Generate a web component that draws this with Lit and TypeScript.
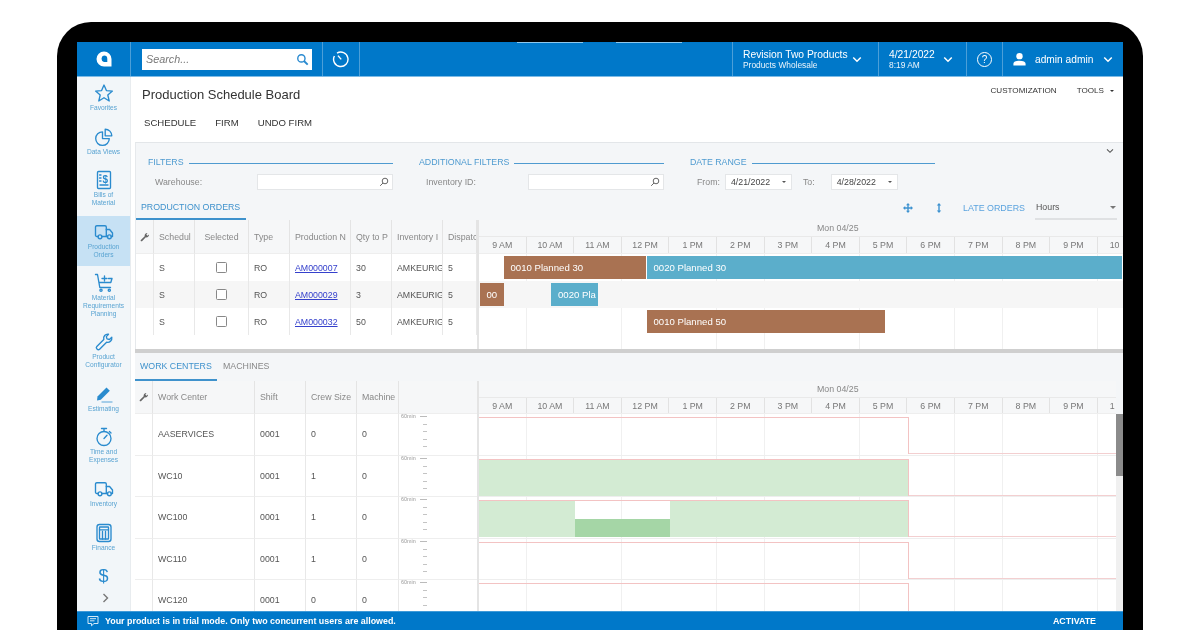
import { LitElement, html, css, nothing } from "lit";
import { customElement } from "lit/decorators.js";

const ic = (body: unknown, cls = "ic", vb = "0 0 20 20") =>
  html`<svg class=${cls} viewBox=${vb}>${body}</svg>`;

const ICONS: Record<string, unknown> = {
  star: ic(html`<svg x="0" y="0" viewBox="0 0 20 20"><polygon points="10,2 12.4,7.6 18.4,8.1 13.8,12 15.2,18 10,14.8 4.8,18 6.2,12 1.6,8.1 7.6,7.6"/></svg>`),
  pie: ic(html`<svg viewBox="0 0 20 20"><path d="M8.5 4.8A6.8 6.8 0 1 0 15.3 11.6H8.5Z"/><path d="M11.2 2.2A6.6 6.6 0 0 1 17.8 8.8H11.2Z"/></svg>`),
  bill: ic(html`<svg viewBox="0 0 20 20"><rect x="3.5" y="1.5" width="13" height="17" rx="1"/><path d="M5.6 5h1.4M5.6 8h1.4M5.6 11h1.4M6 15h8"/><text x="11.4" y="12.5" class="glyph" font-size="10" text-anchor="middle">$</text></svg>`),
  truck: ic(html`<svg viewBox="0 0 20 20"><path d="M4.2 14.5H2.8A1.3 1.3 0 0 1 1.5 13.2V5A1.3 1.3 0 0 1 2.8 3.7H11A1.3 1.3 0 0 1 12.3 5V14.5H7.8"/><path d="M12.3 7.5H15.6L18.5 11V14.5H17.2M13.6 14.5H12.3"/><circle cx="6" cy="14.8" r="1.9"/><circle cx="15.4" cy="14.8" r="1.9"/></svg>`),
  cart: ic(html`<svg viewBox="0 0 20 20"><path d="M1.5 1.5H3.5L5.8 14.5H16.5M5 9.5H16.8L18 5.5H14.5"/><path d="M10.5 3V8M8 5.5H13" /><circle cx="7" cy="17.2" r="1.1"/><circle cx="15.3" cy="17.2" r="1.1"/></svg>`),
  wrench: ic(html`<svg viewBox="0 0 20 20"><path d="M2.8 14.4L9.8 7.4C9 4.4 11.3 1.8 14.5 2.2L12.3 4.6L13 6.9L15.4 7.5L17.8 5.2C18.3 8.4 15.6 11 12.6 10.2L5.6 17.2C4 18.8 1.2 16 2.8 14.4Z"/></svg>`),
  pencil: ic(html`<svg viewBox="0 0 20 20"><path class="fill" d="M3.5 12.5L12.5 3.5L15.8 6.8L6.8 15.8L3 16.4Z"/><path class="faint" d="M8 18H18"/></svg>`),
  watch: ic(html`<svg viewBox="0 0 20 20"><circle cx="10" cy="11.5" r="7"/><path d="M7.5 1.5H12.5M10 1.5V4.5M10 11.5L13 8.2M15.4 4.4L17 6"/></svg>`),
  calc: ic(html`<svg viewBox="0 0 20 20"><rect x="3" y="1.5" width="14" height="17" rx="2.5"/><rect x="5.5" y="4" width="9" height="12" rx=".5"/><path d="M5.5 6.8H14.5M8.5 8.5V16M11.5 8.5V16"/></svg>`),
  dollar: html`<span class="dollar">$</span>`,
};

const NAV = [
  { i: "star", t: ["Favorites"] },
  { i: "pie", t: ["Data Views"] },
  { i: "bill", t: ["Bills of", "Material"] },
  { i: "truck", t: ["Production", "Orders"], on: true },
  { i: "cart", t: ["Material", "Requirements", "Planning"] },
  { i: "wrench", t: ["Product", "Configurator"] },
  { i: "pencil", t: ["Estimating"] },
  { i: "watch", t: ["Time and", "Expenses"] },
  { i: "truck", t: ["Inventory"] },
  { i: "calc", t: ["Finance"] },
  { i: "dollar", t: [] },
];

const HOURS = ["9 AM", "10 AM", "11 AM", "12 PM", "1 PM", "2 PM", "3 PM", "4 PM", "5 PM", "6 PM", "7 PM", "8 PM", "9 PM"];

const ORDERS = [
  { id: "AM000007", qty: "30", bars: [
    { l: 24.5, w: 142, c: "brown", t: "0010 Planned 30" },
    { l: 167.5, w: 475, c: "blue", t: "0020 Planned 30" },
  ] },
  { id: "AM000029", qty: "3", bars: [
    { l: 0.5, w: 24, c: "brown", t: "00" },
    { l: 72, w: 47, c: "blue", t: "0020 Pla" },
  ] },
  { id: "AM000032", qty: "50", bars: [{ l: 167.5, w: 238, c: "brown", t: "0010 Planned 50" }] },
];

const CENTERS = [
  { n: "AASERVICES", crew: "0", g: "none" },
  { n: "WC10", crew: "1", g: "full" },
  { n: "WC100", crew: "1", g: "split" },
  { n: "WC110", crew: "1", g: "none" },
  { n: "WC120", crew: "0", g: "none" },
];

const wrenchSmall = html`<svg class="hwrench" viewBox="0 0 12 12"><path d="M1 9.6L5.6 5C5.2 3 6.8 1 9 1.2L7.6 3L8.9 4.4L10.8 3C11 5.2 9 6.9 7 6.4L2.4 11C1.6 11.8.2 10.4 1 9.6Z"/></svg>`;
const chev = html`<svg class="chev" viewBox="0 0 12 8"><path d="M1.5 1.5L6 6L10.5 1.5"/></svg>`;
const lens = html`<svg class="lens" viewBox="0 0 10 10"><circle cx="6" cy="4" r="2.8"/><path d="M4 6L1.2 8.8"/></svg>`;

@customElement("app-root")
export class AppRoot extends LitElement {
  static styles = css`
    :host { display: block; width: 1200px; height: 630px; overflow: hidden; background: #fff;
      font-family: "Liberation Sans", Arial, sans-serif; color: #444; }
    .frame { box-sizing: border-box; width: 1086px; height: 608px; margin: 22px 0 0 57px; padding: 20px 20px 0;
      background: #000; border-radius: 34px 34px 0 0; }
    .screen { width: 1046px; height: 588px; display: flex; flex-direction: column; background: #fff; overflow: hidden; filter: blur(.3px); }

    .top { height: 35px; flex: none; box-sizing: border-box; display: flex; background: #0078c9; color: #fff; border-bottom: 1px solid #7dbbe6; }
    .tc { flex: none; box-sizing: border-box; height: 100%; display: flex; align-items: center; border-right: 1px solid #4c9fd8; }
    .logo { width: 54px; justify-content: center; }
    .logo svg { width: 16px; height: 16px; }
    .search { width: 192px; padding-left: 11px; }
    .box { width: 170px; height: 21px; background: #fff; display: flex; align-items: center; justify-content: space-between;
      padding: 0 3px 0 4px; box-sizing: border-box; font: italic 10.8px "Liberation Sans", sans-serif; color: #777; }
    .box svg { width: 13px; height: 13px; fill: none; stroke: #2a8ad0; stroke-width: 1.5; }
    .hist { width: 37px; justify-content: center; }
    .hist svg { width: 18px; height: 18px; fill: none; stroke: #fff; stroke-width: 1.4; }
    .grow { flex: 1; border-right: 1px solid #4c9fd8;
      background: linear-gradient(#8cc8ee, #8cc8ee) 157px 0 / 66px 1px no-repeat, linear-gradient(#8cc8ee, #8cc8ee) 256px 0 / 66px 1px no-repeat; }
    .co { width: 146px; padding-left: 10px; gap: 5px; }
    .two { display: flex; flex-direction: column; gap: 1px; width: 104px; }
    .two b { font-weight: 400; font-size: 10.3px; line-height: 11px; white-space: nowrap; }
    .two i { font-style: normal; font-size: 8.4px; line-height: 9px; opacity: .92; white-space: nowrap; }
    .dt { width: 88px; padding-left: 10px; gap: 8px; }
    .dt .two { width: 46px; }
    .help { width: 36px; justify-content: center; }
    .help span { box-sizing: border-box; width: 15px; height: 15px; border: 1.3px solid #fff; border-radius: 50%;
      font-size: 10px; line-height: 13px; text-align: center; }
    .user { width: 120px; border-right: 0; padding-left: 9px; }
    .user svg.u { width: 15px; height: 15px; fill: #fff; margin-right: 8px; }
    .user span { font-size: 10.2px; width: 62px; white-space: nowrap; }
    .user .chev { margin-left: 6px; }
    .chev { width: 10px; height: 7px; fill: none; stroke: #fff; stroke-width: 1.8; flex: none; }

    .main { flex: 1; min-height: 0; display: flex; }
    .side { width: 54px; flex: none; box-sizing: border-box; background: #f2f6f9; display: flex; flex-direction: column;
      gap: 1px; border-right: 1px solid #e8ecef; overflow: hidden; }
    .nav { display: flex; flex-direction: column; align-items: center; padding: 6px 0 8px; color: #5aa4d2; }
    .nav.on { background: #c6e1f4; }
    .nav .ic { width: 20px; height: 20px; display: block; margin-bottom: 1px; fill: none; stroke: #2a8bce; stroke-width: 1.35; stroke-linejoin: round; stroke-linecap: round; }
    .nav .ic .fill { fill: #2a8bce; stroke: none; }
    .nav .ic .faint { stroke: #8cc0e4; }
    .nav .ic .glyph { fill: #2a8bce; stroke: none; font-family: "Liberation Sans", sans-serif; font-weight: 700; }
    .nav span { display: block; font-size: 6.6px; line-height: 7.7px; text-align: center; white-space: nowrap; }
    .nav .dollar { width: 20px; height: 20px; font-size: 18px; line-height: 20px; color: #2a8bce; }
    .more { display: flex; justify-content: center; padding-left: 3px; margin-top: -2px; }
    .more svg { width: 7px; height: 10px; fill: none; stroke: #777; stroke-width: 1.4; }

    .content { flex: 1; min-width: 0; display: flex; flex-direction: column; padding-left: 4px; }
    .head { height: 65px; flex: none; box-sizing: border-box; display: grid; grid-template-columns: 1fr auto; grid-template-rows: 17px auto; padding: 9px 9px 0 7px; }
    h1 { margin: 0; font-size: 13px; font-weight: 400; line-height: 17px; color: #333; }
    .tools { display: flex; gap: 20px; font-size: 8.1px; line-height: 10px; color: #333; }
    .tools span:last-child::after { content: ""; display: inline-block; margin-left: 6px; vertical-align: 1px;
      border: 2.5px solid transparent; border-top-color: #333; border-bottom: 0; }
    .bar { grid-column: 1 / 3; display: flex; gap: 19px; font-size: 9.6px; line-height: 12px; color: #333; padding: 14px 0 0 2px; }

    .upper { height: 207px; flex: none; box-sizing: border-box; display: flex; flex-direction: column; background: #f4f6f8;
      border-top: 1px solid #e3e6e9; border-left: 1px solid #e6e9ec; overflow: hidden; }
    .filters { height: 53px; flex: none; box-sizing: border-box; display: grid; grid-template-columns: repeat(3, 245px); column-gap: 26px;
      padding: 14px 0 0 12px; position: relative; }
    .collapse { position: absolute; top: 5px; right: 9px; width: 8px; height: 6px; stroke: #555; stroke-width: 1.6; }
    .gh { display: flex; align-items: center; gap: 5px; font-size: 8.8px; line-height: 11px; color: #4f9bd0; white-space: nowrap; }
    .gh::after { content: ""; flex: 1; height: 1px; background: #4f9bd0; margin-top: 2px; }
    .fr { display: flex; align-items: center; height: 16px; margin-top: 6px; font-size: 8.8px; color: #888; }
    .fr label { padding-left: 7px; }
    .fr .lbl { width: 109px; box-sizing: border-box; }
    .in { box-sizing: border-box; height: 16px; background: #fff; border: 1px solid #e4e6e8; display: flex; align-items: center; justify-content: flex-end; padding-right: 3px; }
    .in.w { width: 136px; }
    .lens { width: 10px; height: 10px; fill: none; stroke: #666; stroke-width: 1; }
    .date { width: 67px; margin-left: 5px; justify-content: space-between; padding: 0 5px; color: #444; font-size: 8.8px; }
    .date::after { content: ""; border: 2.5px solid transparent; border-top-color: #555; border-bottom: 0; }
    .to { margin-left: 11px; padding-left: 0 !important; }
    .date.d2 { margin-left: 16px; }

    .tabs { height: 24px; flex: none; display: flex; align-items: stretch; font-size: 9.2px; color: #888; white-space: nowrap; }
    .tab { display: flex; align-items: center; padding: 0 5px; border-bottom: 2px solid transparent; box-sizing: border-box; }
    .tab.on { color: #3f92cc; border-bottom-color: #3f92cc; }
    .tab.a { width: 110px; padding-left: 5px; font-size: 8.8px; }
    .tab.b { width: 82px; font-size: 8.8px; }
    .tab.c { padding-left: 6px; font-size: 8.8px; }
    .right { margin-left: auto; display: flex; align-items: center; }
    .right svg { width: 10px; height: 10px; fill: #3d92d0; }
    .mv { margin-right: 21px; }
    .late { color: #5aa3de; margin: 0 10px 0 19px; font-size: 8.9px; }
    .hrs { box-sizing: border-box; width: 82px; height: 24px; display: flex; align-items: center; justify-content: space-between;
      border-bottom: 2px solid #dfe1e3; margin-right: 6px; padding: 0 1px; font-size: 8.8px; color: #555; }
    .hrs::after { content: ""; border: 3.5px solid transparent; border-top-color: #777; border-bottom: 0; }

    .split { display: flex; flex: 1; min-height: 0; overflow: hidden; }
    .tbl { display: grid; flex: none; align-content: start; font-size: 8.8px; color: #555; background: #fff; }
    .tbl.o { width: 341px; grid-template-columns: 18px 41px 54px 41px 61px 41px 51px 34px; grid-template-rows: 34px repeat(3, 27px); }
    .tbl.w { width: 342px; grid-template-columns: 18px 102px 51px 51px 42px 78px; grid-template-rows: 33px repeat(5, 41.5px); }
    .hc { box-sizing: border-box; display: flex; align-items: center; padding-left: 5px; color: #888; white-space: nowrap;
      overflow: hidden; border-right: 1px solid #e4e4e4; border-bottom: 1px solid #eee; background: #f6f7f8; }
    .hc.ctr { justify-content: center; padding: 0; }
    .hc.wr { padding-left: 4px; }
    .hc.last { border-right: 0; }
    .hwrench { width: 10px; height: 10px; fill: #666; }
    .cell { box-sizing: border-box; display: flex; align-items: center; padding-left: 5px; white-space: nowrap; overflow: hidden;
      border-right: 1px solid #e8e8e8; background: #fff; }
    .cell.alt { background: #f6f6f6; }
    .cell.ctr { justify-content: center; padding: 0; }
    .cell.b { border-bottom: 1px solid #eee; }
    .cb { width: 11px; height: 11px; box-sizing: border-box; border: 1px solid #888; border-radius: 1.5px; background: #fff; }
    a { color: #3540cc; text-decoration: underline; }
    .rule { width: 2px; flex: none; background: #e4e4e4; }

    .gantt { flex: 1; min-width: 0; overflow: hidden; display: flex; flex-direction: column; }
    .day { height: 17px; flex: none; display: flex; align-items: center; padding-left: 338px; font-size: 8.8px; color: #888; background: #f6f7f8; border-bottom: 1px solid #e9e9e9; box-sizing: border-box; }
    .hours { height: 17px; flex: none; display: flex; background: #f6f7f8; border-bottom: 1px solid #eee; box-sizing: border-box; }
    .hours.s { height: 16px; }
    .hours span { flex: none; width: 47.6px; box-sizing: border-box; display: flex; align-items: center; justify-content: center;
      font-size: 8.8px; color: #777; border-right: 1px solid #e2e2e2; }
    .hours span.clip { width: auto; border-right: 0; padding-left: 12px; }
    .lane { position: relative; background-color: #fff; box-sizing: border-box; flex: none;
      background-image: repeating-linear-gradient(to right, transparent 0, transparent 47px, #f0f0f0 47px, #f0f0f0 47.6px); }
    .lane.t { height: 27px; }
    .lane.alt { background-color: #f6f6f6; background-image: none; }
    .lane.fill { flex: 1; }
    .gbar { position: absolute; top: 2px; height: 23px; box-sizing: border-box; display: flex; align-items: center; padding-left: 7px;
      color: #fff; font-size: 9.6px; white-space: nowrap; overflow: hidden; }
    .gbar.brown { background: #a97252; }
    .gbar.blue { background: #5baecb; }

    .sep { height: 4px; flex: none; background: #cfcfcf; }
    .lower { flex: 1; min-height: 0; display: flex; flex-direction: column; background: #f4f6f8; overflow: hidden; }
    .tabs.l { height: 28px; }
    .lane.w { height: 41.5px; border-bottom: 1px solid #eee; }
    .shift { position: absolute; left: 0; top: 3px; width: 430px; height: 37px; box-sizing: border-box; display: flex;
      border-top: 1px solid #f3c3c3; border-right: 1px solid #f3c3c3; }
    .off { position: absolute; left: 430px; right: 0; top: 39px; height: 1px; background: #f3cfd0; }
    .seg { flex: none; }
    .seg.g { background: #d3ebd3; }
    .seg.sp { display: flex; flex-direction: column; justify-content: flex-end; }
    .seg.sp i { display: block; height: 50%; background: #a5d6a6; }
    .gg { flex: 1; }
    .sb { width: 7px; flex: none; background: #f0f0f0; margin-top: 33px; }
    .thumb { height: 62px; background: #8b8b8b; }
    .gcol { display: flex; flex: 1; min-width: 0; overflow: hidden; }
    .ggw { flex: 1; min-width: 0; display: flex; flex-direction: column; overflow: hidden; }
    .axis { box-sizing: border-box; position: relative; background: #fff; border-bottom: 1px solid #eee; }
    .axis em { position: absolute; left: 2px; top: -1px; font: normal 5.4px/6px "Liberation Sans", sans-serif; color: #999; }
    .axis b { position: absolute; left: 21px; top: 2px; width: 7px; height: 1px; background: #bbb; }
    .axis u { position: absolute; left: 24px; width: 4px; height: 1px; background: #c4c4c4; }

    .foot { height: 19px; flex: none; box-sizing: border-box; background: #0078c9; border-top: 1px solid #3f9ad8; color: #fff; display: flex; align-items: center;
      padding: 0 27px 0 10px; font-size: 8.88px; font-weight: 700; }
    .foot svg { width: 12px; height: 12px; fill: none; stroke: #d5e9f7; stroke-width: 1; margin-right: 6px; }
    .foot span:last-child { margin-left: auto; }
  `;

  private nav() {
    return html`<nav class="side">
      ${NAV.map((n) => html`<div class="nav ${n.on ? "on" : ""}">${ICONS[n.i]}${n.t.map((l) => html`<span>${l}</span>`)}</div>`)}
      <div class="more"><svg viewBox="0 0 7 10"><path d="M1.5 1L5.5 5L1.5 9"/></svg></div>
    </nav>`;
  }

  private hours(last: string, short = false) {
    return html`<div class="day">Mon 04/25</div>
      <div class="hours ${short ? "s" : ""}">${HOURS.map((h) => html`<span>${h}</span>`)}<span class="clip">${last}</span></div>`;
  }

  private orders() {
    const heads = ["Schedul", "Selected", "Type", "Production N", "Qty to P", "Inventory I", "Dispatc"];
    return html`<div class="split">
      <div class="tbl o">
        <div class="hc wr">${wrenchSmall}</div>
        ${heads.map((h) => html`<div class="hc ${h === "Selected" ? "ctr" : ""}">${h}</div>`)}
        ${ORDERS.map((o, i) => {
          const a = i === 1 ? "alt" : "";
          return html`<div class="cell ${a}"></div><div class="cell ${a}">S</div>
            <div class="cell ctr ${a}"><div class="cb"></div></div>
            <div class="cell ${a}">RO</div><div class="cell ${a}"><a href="#">${o.id}</a></div>
            <div class="cell ${a}">${o.qty}</div><div class="cell ${a}">AMKEURIG</div><div class="cell ${a}">5</div>`;
        })}
      </div>
      <div class="rule"></div>
      <div class="gantt">
        ${this.hours("10")}
        ${ORDERS.map((o, i) => html`<div class="lane t ${i === 1 ? "alt" : ""}">
          ${o.bars.map((b) => html`<div class="gbar ${b.c}" style="left:${b.l}px;width:${b.w}px">${b.t}</div>`)}
        </div>`)}
        <div class="lane fill"></div>
      </div>
    </div>`;
  }

  private greens(g: string) {
    if (g === "full") return html`<div class="seg g gg"></div>`;
    if (g === "split")
      return html`<div class="seg g" style="width:96px"></div><div class="seg sp" style="width:95px"><i></i></div><div class="seg g gg"></div>`;
    return nothing;
  }

  private centers() {
    const heads = ["Work Center", "Shift", "Crew Size", "Machine"];
    return html`<div class="split">
      <div class="tbl w">
        <div class="hc wr">${wrenchSmall}</div>
        ${heads.map((h) => html`<div class="hc">${h}</div>`)}
        <div class="hc last"></div>
        ${CENTERS.map((c) => html`<div class="cell b"></div><div class="cell b">${c.n}</div><div class="cell b">0001</div>
          <div class="cell b">${c.crew}</div><div class="cell b">0</div>
          <div class="axis"><em>60min</em><b></b>
            ${[10, 17, 25, 32].map((t) => html`<u style="top:${t}px"></u>`)}
          </div>`)}
      </div>
      <div class="rule"></div>
      <div class="gcol">
        <div class="ggw">
          ${this.hours("1", true)}
          ${CENTERS.map((c) => html`<div class="lane w">
            <div class="shift">${this.greens(c.g)}</div><div class="off"></div>
          </div>`)}
        </div>
        <div class="sb"><div class="thumb"></div></div>
      </div>
    </div>`;
  }

  render() {
    return html`<div class="frame"><div class="screen">
      <header class="top">
        <div class="tc logo"><svg viewBox="0 0 16 16"><path fill="#fff" d="M8 .5A7.5 7.5 0 1 0 8 15.5H15.5V8A7.5 7.5 0 0 0 8 .5Z"/><path fill="#0078c9" d="M8 4.6A3.3 3.3 0 0 1 11.3 8V11H8A3.3 3.3 0 0 1 8 4.6Z"/></svg></div>
        <div class="tc search"><div class="box">Search...<svg viewBox="0 0 14 14"><circle cx="5.8" cy="5.8" r="3.9"/><path d="M8.6 8.6L12.6 12.6" stroke-width="2"/></svg></div></div>
        <div class="tc hist"><svg viewBox="0 0 18 18"><path d="M5 3.2A7.2 7.2 0 1 1 2.4 6"/><path d="M9.2 9.4L6 5.6"/></svg></div>
        <div class="grow"></div>
        <div class="tc co"><div class="two"><b>Revision Two Products</b><i>Products Wholesale</i></div>${chev}</div>
        <div class="tc dt"><div class="two"><b>4/21/2022</b><i>8:19 AM</i></div>${chev}</div>
        <div class="tc help"><span>?</span></div>
        <div class="tc user"><svg class="u" viewBox="0 0 16 16"><circle cx="8" cy="4.4" r="3.4"/><path d="M1.5 14.5V12.6C1.5 10.4 4 9.4 8 9.4S14.5 10.4 14.5 12.6V14.5Z"/></svg><span>admin admin</span>${chev}</div>
      </header>
      <div class="main">
        ${this.nav()}
        <main class="content">
          <div class="head">
            <h1>Production Schedule Board</h1>
            <div class="tools"><span>CUSTOMIZATION</span><span>TOOLS</span></div>
            <div class="bar"><span>SCHEDULE</span><span>FIRM</span><span>UNDO FIRM</span></div>
          </div>
          <section class="upper">
            <div class="filters">
              <div><div class="gh">FILTERS</div><div class="fr"><label class="lbl">Warehouse:</label><div class="in w">${lens}</div></div></div>
              <div><div class="gh">ADDITIONAL FILTERS</div><div class="fr"><label class="lbl">Inventory ID:</label><div class="in w">${lens}</div></div></div>
              <div><div class="gh">DATE RANGE</div><div class="fr"><label>From:</label><div class="in date">4/21/2022</div><label class="to">To:</label><div class="in date d2">4/28/2022</div></div></div>
              <svg class="collapse" viewBox="0 0 12 8" fill="none"><path d="M1.5 1.5L6 6L10.5 1.5"/></svg>
            </div>
            <div class="tabs">
              <div class="tab on a">PRODUCTION ORDERS</div>
              <div class="right">
                <svg class="mv" viewBox="0 0 10 10"><path d="M5 0L7 2.2H5.7V4.3H7.8V3L10 5L7.8 7V5.7H5.7V7.8H7L5 10L3 7.8H4.3V5.7H2.2V7L0 5L2.2 3V4.3H4.3V2.2H3Z"/></svg>
                <svg viewBox="0 0 10 10"><path d="M5 0L7.2 2.6H5.7V7.4H7.2L5 10L2.8 7.4H4.3V2.6H2.8Z"/></svg>
                <span class="late">LATE ORDERS</span>
                <div class="hrs">Hours</div>
              </div>
            </div>
            ${this.orders()}
          </section>
          <div class="sep"></div>
          <section class="lower">
            <div class="tabs l"><div class="tab on b">WORK CENTERS</div><div class="tab c">MACHINES</div></div>
            ${this.centers()}
          </section>
        </main>
      </div>
      <footer class="foot">
        <svg viewBox="0 0 12 12"><path d="M1 1.5H11V8.5H7L4.5 10.8V8.5H1Z"/><path d="M3 3.7H9M3 5.8H7.5"/></svg>
        <span>Your product is in trial mode. Only two concurrent users are allowed.</span>
        <span>ACTIVATE</span>
      </footer>
    </div></div>`;
  }
}
